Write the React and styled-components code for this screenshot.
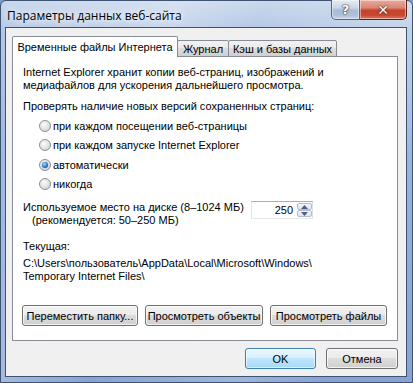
import styled, { createGlobalStyle } from 'styled-components'

const GlobalStyle = createGlobalStyle`
  html, body { margin: 0; padding: 0; }
  body { width: 413px; height: 383px; overflow: hidden; background: #7f9ccb; }
`;

const Window = styled.div`
  box-sizing: border-box;
  width: 413px;
  height: 383px;
  display: flex;
  flex-direction: column;
  padding: 0 5px 5px 4px;
  border: 1px solid #3e5373;
  border-radius: 6px 6px 0 0;
  background:
    linear-gradient(115deg, rgba(255,255,255,0) 0%, rgba(255,255,255,0.25) 30%, rgba(255,255,255,0) 45%, rgba(255,255,255,0.2) 70%, rgba(255,255,255,0) 85%),
    linear-gradient(180deg, #c9d8ec 0%, #b3c7e5 8%, #97b2dc 40%, #86a3d2 100%);
  font-family: Tahoma, "Liberation Sans", sans-serif;
`;

const TitleBar = styled.div`
  height: 26px;
  display: flex;
  align-items: flex-start;
  justify-content: space-between;
`;

const Title = styled.div`
  margin-top: 6px;
  padding-left: 2px;
  font-family: "Segoe UI", "Open Sans", sans-serif;
  font-size: 12px;
  color: #000;
  text-shadow: 0 0 6px #fff, 0 0 10px rgba(255,255,255,0.9);
`;

const Captions = styled.div`
  display: flex;
  margin-top: -1px;
`;

const CaptionButton = styled.div`
  box-sizing: border-box;
  width: ${p => p.$w}px;
  height: 20px;
  display: flex;
  align-items: center;
  justify-content: center;
  border: 1px solid ${p => (p.$close ? '#5a231a' : '#4f6480')};
  border-top: none;
  border-radius: ${p => (p.$close ? '0 0 5px 0' : '0 0 0 5px')};
  ${p => (p.$close ? 'border-left: none;' : '')}
  background: ${p => p.$close
    ? 'linear-gradient(180deg, #e9a99c 0%, #d98878 40%, #c4432b 55%, #c8472f 80%, #dc7a64 100%)'
    : 'linear-gradient(180deg, #e4ebf4 0%, #ccd7e8 40%, #a9bbd6 55%, #aec0da 80%, #c6d4e8 100%)'};
  box-shadow: inset 0 0 0 1px rgba(255,255,255,0.45);
  color: #fff;
  font-family: "DejaVu Sans", sans-serif;
  font-weight: bold;
  font-size: ${p => (p.$close ? 14 : 13)}px;
  text-shadow: 0 0 2px #2b2b2b, 0 0 1px #000;
`;

const Client = styled.div`
  flex: 1;
  display: flex;
  flex-direction: column;
  background: #f0f0f0;
  border: 1px solid #3e536f;
  padding: 8px 8px 0 6px;
  color: #000;
  font-size: 11px;
`;

const TabStrip = styled.div`
  display: flex;
  align-items: flex-end;
  height: 21px;
  position: relative;
  z-index: 1;
  margin-bottom: -1px;
`;

const Tab = styled.div`
  box-sizing: border-box;
  width: ${p => p.$w}px;
  height: ${p => (p.$active ? 21 : 17)}px;
  padding-bottom: ${p => (p.$active ? 1 : 0)}px;
  margin-left: ${p => (p.$first ? 0 : -1)}px;
  display: flex;
  align-items: center;
  justify-content: center;
  border: 1px solid #898c95;
  border-bottom: ${p => (p.$active ? 'none' : '1px solid #898c95')};
  border-radius: 2px 2px 0 0;
  background: ${p => p.$active ? '#fff' : 'linear-gradient(180deg, #f2f2f2 0%, #ebebeb 45%, #dddddd 50%, #cfcfcf 100%)'};
  white-space: nowrap;
  ${p => (p.$active ? 'z-index: 2;' : '')}
`;

const Panel = styled.div`
  box-sizing: border-box;
  height: 285px;
  background: #fff;
  border: 1px solid #898c95;
  padding: 9px 9px 0 10px;
  display: flex;
  flex-direction: column;
`;

const Text = styled.div`
  line-height: 13px;
  margin-top: ${p => p.$mt || 0}px;
  padding-left: ${p => p.$indent || 0}px;
  white-space: nowrap;
`;

const RadioList = styled.div`
  display: flex;
  flex-direction: column;
  margin-top: 3px;
  padding-left: 16px;
`;

const RadioRow = styled.label`
  display: flex;
  align-items: center;
  height: 19.5px;
  gap: 2px;
  white-space: nowrap;
`;

const Radio = styled.span`
  box-sizing: border-box;
  width: 12px;
  height: 12px;
  border-radius: 50%;
  border: 1px solid #8d8f92;
  background: radial-gradient(circle at 40% 35%, #fafafa 0%, #e4e4e4 50%, #c9c9c9 100%);
  display: flex;
  align-items: center;
  justify-content: center;
  flex: none;
  &::after {
    content: '';
    display: ${p => (p.$checked ? 'block' : 'none')};
    width: 6px;
    height: 6px;
    border-radius: 50%;
    background: radial-gradient(circle at 40% 35%, #a6e0ff 0%, #2a7fd0 50%, #0c3f7e 100%);
    box-shadow: 0 0 1px #1b5aa0;
  }
`;

const DiskRow = styled.div`
  display: flex;
  align-items: flex-start;
  margin-top: 7px;
`;

const DiskLabel = styled.div`
  width: 228px;
  flex: none;
`;

const Spin = styled.div`
  box-sizing: border-box;
  width: 62px;
  height: 18px;
  display: flex;
  align-items: stretch;
  border: 1px solid #abadb3;
  border-left-color: #e2e3ea;
  border-right-color: #dbdfe6;
  border-bottom-color: #e3e9ef;
  background: #fff;
`;

const SpinValue = styled.div`
  flex: 1;
  text-align: right;
  padding-right: 4px;
  line-height: 16px;
`;

const SpinButtons = styled.div`
  width: 15px;
  display: flex;
  flex-direction: column;
  padding: 1px 0;
  box-sizing: border-box;
`;

const SpinButton = styled.div`
  flex: 1;
  display: flex;
  align-items: center;
  justify-content: center;
  border: 1px solid #b5bccb;
  border-radius: 2px;
  background: linear-gradient(180deg, #f3f5f9 0%, #dfe5ef 100%);
`;

const ButtonRow = styled.div`
  display: flex;
  gap: 7px;
  margin-top: ${p => p.$mt || 0}px;
  margin-left: ${p => p.$ml || 0}px;
`;

const Button = styled.div`
  box-sizing: border-box;
  width: ${p => p.$w}px;
  height: 21px;
  display: flex;
  align-items: center;
  justify-content: center;
  border: 1px solid ${p => (p.$default ? '#3c7fb1' : '#707070')};
  border-radius: 3px;
  background: ${p => p.$default
    ? 'linear-gradient(180deg, #eaf6fd 0%, #d9f0fc 45%, #bee6fd 50%, #a7d9f5 100%)'
    : 'linear-gradient(180deg, #f2f2f2 0%, #ebebeb 45%, #dddddd 50%, #cfcfcf 100%)'};
  box-shadow: inset 0 0 0 1px ${p => (p.$default ? 'rgba(255,255,255,0.6)' : 'rgba(255,255,255,0.7)')};
  white-space: nowrap;
`;

const Footer = styled.div`
  display: flex;
  justify-content: flex-end;
  gap: 10px;
  margin-top: 7px;
`;

function Arrow({ up }) {
  return (
    <svg width="7" height="4" viewBox="0 0 7 4">
      <polygon points={up ? '0,4 3.5,0 7,4' : '0,0 3.5,4 7,0'} fill="#4d6185" />
    </svg>
  )
}

const options = [
  'при каждом посещении веб-страницы',
  'при каждом запуске Internet Explorer',
  'автоматически',
  'никогда',
]

export default function App() {
  return (
    <>
      <GlobalStyle />
      <Window>
        <TitleBar>
          <Title>Параметры данных веб-сайта</Title>
          <Captions>
            <CaptionButton $w={29}>?</CaptionButton>
            <CaptionButton $w={47} $close>✕</CaptionButton>
          </Captions>
        </TitleBar>
        <Client>
          <TabStrip>
            <Tab $active $first $w={166}>Временные файлы Интернета</Tab>
            <Tab $w={52}>Журнал</Tab>
            <Tab $w={109}>Кэш и базы данных</Tab>
          </TabStrip>
          <Panel>
            <Text>Internet Explorer хранит копии веб-страниц, изображений и</Text>
            <Text>медиафайлов для ускорения дальнейшего просмотра.</Text>
            <Text $mt={8}>Проверять наличие новых версий сохраненных страниц:</Text>
            <RadioList>
              {options.map((o, i) => (
                <RadioRow key={o}>
                  <Radio $checked={i === 2} />
                  {o}
                </RadioRow>
              ))}
            </RadioList>
            <DiskRow>
              <DiskLabel>
                <Text>Используемое место на диске (8–1024 МБ)</Text>
                <Text $indent={9}>(рекомендуется: 50–250 МБ)</Text>
              </DiskLabel>
              <Spin>
                <SpinValue>250</SpinValue>
                <SpinButtons>
                  <SpinButton><Arrow up /></SpinButton>
                  <SpinButton><Arrow /></SpinButton>
                </SpinButtons>
              </Spin>
            </DiskRow>
            <Text $mt={13}>Текущая:</Text>
            <Text $mt={4}>C:\Users\пользователь\AppData\Local\Microsoft\Windows\</Text>
            <Text>Temporary Internet Files\</Text>
            <ButtonRow $mt={22} $ml={-1}>
              <Button $w={116}>Переместить папку...</Button>
              <Button $w={118}>Просмотреть объекты</Button>
              <Button $w={117}>Просмотреть файлы</Button>
            </ButtonRow>
          </Panel>
          <Footer>
            <Button $w={71} $default>OK</Button>
            <Button $w={72}>Отмена</Button>
          </Footer>
        </Client>
      </Window>
    </>
  )
}
